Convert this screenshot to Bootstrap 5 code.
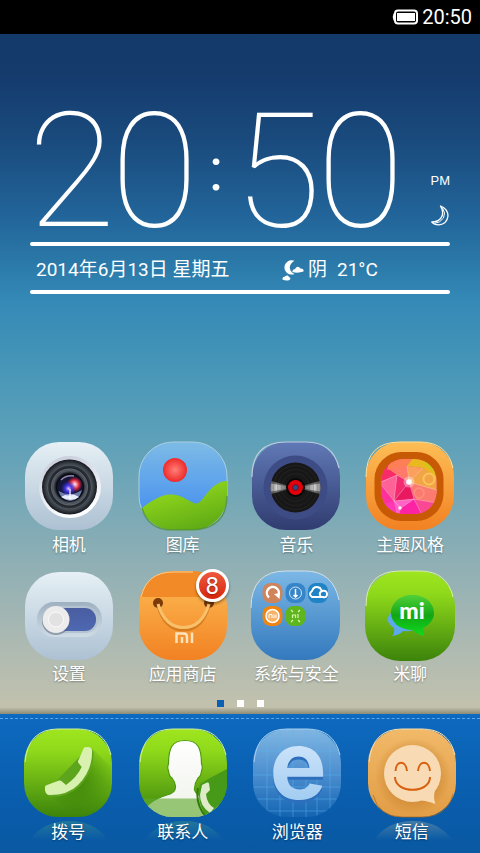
<!DOCTYPE html>
<html lang="zh-CN">
<head>
<meta charset="utf-8">
<meta name="viewport" content="width=device-width, initial-scale=1">
<title>桌面</title>
<link href="https://cdn.jsdelivr.net/npm/bootstrap@5.3.0/dist/css/bootstrap.min.css" rel="stylesheet">
<style>
body{font-family:"Noto Sans CJK SC",sans-serif;background:#0a58a4}
.latin{font-family:Roboto,"Liberation Sans",sans-serif}
.status-bar{height:34px;background:#000;font-size:20px;line-height:34px}
.wallpaper{background:linear-gradient(180deg,#143a6c 0%,#153b6d 6%,#1a4b7e 16%,#22659a 27%,#2b7aa9 34%,#3489b6 39%,#4796b8 49%,#5ca0b9 59%,#8aaeb5 76%,#a6b7b3 87%,#bec0ae 97%,#c2c1ad 99%,#8c8b76 100%)}
.clock-widget{margin:68px 30px 0}
.clock-face{height:136px}
.digit{width:83px;height:136px;font-size:160px;line-height:140px;font-weight:100}
.colon{width:40px;font-size:60px;line-height:60px}
.meridiem{font-family:"Liberation Sans",sans-serif;font-size:13px;line-height:16px;padding-top:71px}
.rule{height:4px;border-radius:2px;background:#fff}
.info-row{height:44px;padding:4px 6px 0;font-family:Roboto,"Noto Sans CJK SC",sans-serif;font-size:19px;line-height:40px}
.date-part{width:246px}
.sky-state{width:29px}
.app-rows{padding:0 13px 0 12px;row-gap:13px}
.app{color:#fff;font-size:17px;line-height:26px;text-shadow:0 1px 2px rgba(0,0,0,.35)}
.app:hover{color:#fff}
.app svg{display:block;overflow:visible}
.count{position:absolute;left:58px;top:-1px;width:33px;height:33px;border:3px solid #fff;border-radius:50%;background:linear-gradient(#ee5a3c,#d8260c);font-size:24px;line-height:28px;box-shadow:0 2px 3px rgba(0,0,0,.4)}
.pager{gap:13px;padding:14px 0 7px}
.pager button{width:7px;height:7px;background:#fff}
.pager .current{background:#0c60b4}
.dock{background:linear-gradient(#0d6ac0,#0a5fb0 50%,#0958a2);padding:4px 11px 9px}
.stitch{border-top:1px dashed #5aa6e6;margin:0 -11px 9px}
.browser-letter{font:700 96px Inter,"Liberation Sans",sans-serif;filter:drop-shadow(0 3px 0 #2d6fbd);text-shadow:none}
</style>
</head>
<body class="min-vh-100 d-flex flex-column text-white">
<svg width="0" height="0" class="position-absolute" aria-hidden="true">
<defs>
<clipPath id="tile"><rect x="1" y="1" width="88" height="88" rx="34"/></clipPath>
<linearGradient id="silver" x2="0" y2="1"><stop offset="0" stop-color="#e6f0f5"/><stop offset="1" stop-color="#adc1d3"/></linearGradient>
<linearGradient id="sky" x2="0" y2="1"><stop offset="0" stop-color="#7dbbe6"/><stop offset=".7" stop-color="#4f97ee"/></linearGradient>
<linearGradient id="hill" x2=".5" y2="1"><stop offset="0" stop-color="#a0e41e"/><stop offset="1" stop-color="#62ad16"/></linearGradient>
<linearGradient id="navy" x2="0" y2="1"><stop offset="0" stop-color="#6079b6"/><stop offset="1" stop-color="#303c70"/></linearGradient>
<linearGradient id="amber" x2="0" y2="1"><stop offset="0" stop-color="#fdbe56"/><stop offset="1" stop-color="#f28122"/></linearGradient>
<linearGradient id="folder" x2="0" y2="1"><stop offset="0" stop-color="#7cb8e6"/><stop offset="1" stop-color="#3379bd"/></linearGradient>
<linearGradient id="lime" x2="0" y2="1"><stop offset="0" stop-color="#9fe61e"/><stop offset=".25" stop-color="#8fd91b"/><stop offset="1" stop-color="#3c830b"/></linearGradient>
<linearGradient id="peach" x2="0" y2="1"><stop offset="0" stop-color="#f1b969"/><stop offset="1" stop-color="#e29d45"/></linearGradient>
<linearGradient id="glass" x2="0" y2="1"><stop offset="0" stop-color="#80b6e2"/><stop offset=".5" stop-color="#4d8fd0"/><stop offset="1" stop-color="#1464b2"/></linearGradient>
<linearGradient id="reflect" x2="0" y2="1"><stop offset="0" stop-color="#46a088" stop-opacity=".4"/><stop offset="1" stop-color="#46a088" stop-opacity="0"/></linearGradient>
<linearGradient id="reflectWarm" x2="0" y2="1"><stop offset="0" stop-color="#c9c9a0" stop-opacity=".3"/><stop offset="1" stop-color="#c9c9a0" stop-opacity="0"/></linearGradient>
</defs>
</svg>

<header class="status-bar latin d-flex align-items-center justify-content-end pe-2">
<svg class="me-1" width="26" height="16" viewBox="0 0 26 16" role="img" aria-label="电池"><rect x="3" y="1.500" width="22" height="13" rx="3" fill="none" stroke="#fff" stroke-width="2"/><path d="M3 4.500H1.500Q0 8 1.500 11.500H3Z" fill="#fff"/><rect x="5" y="4" width="18" height="8" fill="#fff"/></svg>
<span>20:50</span>
</header>

<main class="wallpaper flex-grow-1 d-flex flex-column">
<section class="clock-widget">
<div class="clock-face latin d-flex">
<span class="digit d-flex justify-content-center">2</span><span class="digit d-flex justify-content-center">0</span><span class="colon text-center align-self-center">:</span><span class="digit d-flex justify-content-center">5</span><span class="digit d-flex justify-content-center">0</span>
<div class="meridiem ms-auto text-end"><div>PM</div>
<svg class="mt-3 d-block" width="18" height="21" viewBox="0 0 18 21" fill="none" stroke="#fff" stroke-width="1.300" stroke-linejoin="round" role="img" aria-label="夜间"><path d="M9.500 1Q17 4 17 11Q16 19 8 19.800Q3 19.800 .8 17Q7 17 10 13Q13.500 8 9.500 1Z"/><path d="M11.500 3Q15 8 12.500 13Q9 18 4 18.200" stroke-width="1"/></svg></div>
</div>
<div class="rule mt-1"></div>
<div class="info-row d-flex align-items-center">
<div class="date-part">2014年6月13日 星期五</div>
<svg class="me-1" width="22" height="21" viewBox="0 0 22 21" fill="#fff" aria-hidden="true"><path d="M12.500 .8A7.200 7.200 0 1 0 12.500 14L10 12.500Q4.500 6 12.500 .8Z"/><path d="M10.500 12Q10 9.500 13 9Q15.500 5 18.500 8.500Q22 8.500 21.500 11.500Q16 13.500 10.500 12ZM.5 19.500Q0 17 3 16.500Q5.500 14.500 7 17Q9.500 18 7.500 20Q4 21.300 .5 19.500Z"/></svg>
<span class="sky-state">阴</span><span>21°C</span>
</div>
<div class="rule"></div>
</section>

<nav class="app-rows row g-0 mt-auto" aria-label="应用">
<a href="#" class="app col-3 text-decoration-none d-flex flex-column align-items-center">
<svg width="90" height="90" viewBox="0 0 90 90"><defs><radialGradient id="lens"><stop offset="0" stop-color="#1b1f33"/><stop offset=".5" stop-color="#171a22"/><stop offset=".6" stop-color="#555c66"/><stop offset=".7" stop-color="#20242a"/><stop offset=".84" stop-color="#41474f"/><stop offset="1" stop-color="#14171c"/></radialGradient><linearGradient id="bezel" x2=".4" y2="1"><stop offset="0" stop-color="#c3c8d6"/><stop offset=".5" stop-color="#dfe2ec"/><stop offset="1" stop-color="#fdfeff"/></linearGradient><radialGradient id="redGlow"><stop offset="0" stop-color="#fff"/><stop offset=".3" stop-color="#ff8a90"/><stop offset=".6" stop-color="#e0233a" stop-opacity=".9"/><stop offset="1" stop-color="#a01030" stop-opacity="0"/></radialGradient><radialGradient id="blueGlow"><stop offset="0" stop-color="#e6c6ff"/><stop offset=".35" stop-color="#4a3cf0"/><stop offset="1" stop-color="#2020c0" stop-opacity="0"/></radialGradient></defs><rect x="1" y="1" width="88" height="88" rx="34" fill="url(#silver)"/><circle cx="46" cy="46" r="31" fill="url(#bezel)"/><circle cx="45.500" cy="46" r="27.500" fill="url(#lens)"/><circle cx="45.500" cy="46" r="22" fill="none" stroke="#626a73" stroke-width=".6"/><circle cx="45.500" cy="46" r="18" fill="none" stroke="#7b838b" stroke-width=".6"/><circle cx="46" cy="46.500" r="13.500" fill="#151736" stroke="#050508"/><path d="M34.500 50Q46 57 58 49Q55 60 46 60Q37 59 34.500 50Z" fill="#8fa6d0" opacity=".75"/><path d="M37 56Q46 50 55 56Q47 62 37 56Z" fill="#e9effa"/><circle cx="50.500" cy="43.500" r="8" fill="url(#redGlow)"/><circle cx="44.500" cy="47.500" r="8" fill="url(#blueGlow)"/><path d="M46 48V58" stroke="#fff" stroke-width="1.200"/><path d="M37 39Q42 34 50 35" fill="none" stroke="#8e86a8" stroke-width="1.500"/></svg>
相机</a>
<a href="#" class="app col-3 text-decoration-none d-flex flex-column align-items-center">
<svg width="90" height="90" viewBox="0 0 90 90"><defs><radialGradient id="sun"><stop offset="0" stop-color="#ff8078"/><stop offset="1" stop-color="#ee2a2a"/></radialGradient></defs><rect x="1" y="1" width="88" height="88" rx="34" fill="url(#sky)" stroke="#a9cfe0" stroke-width="1"/><g clip-path="url(#tile)"><path d="M0 70C12 61 22 53 34 53.500C45 54 54 63 59 62.500C66 61 72 40 90 40V90H0Z" fill="url(#hill)"/><circle cx="37" cy="29" r="12" fill="url(#sun)"/></g><path d="M4 67Q10 89 35 89H55Q89 87 89 55" fill="none" stroke="#488c38" stroke-width="1.500" opacity=".7"/></svg>
图库</a>
<a href="#" class="app col-3 text-decoration-none d-flex flex-column align-items-center">
<svg width="90" height="90" viewBox="0 0 90 90"><defs><linearGradient id="shine" x2="1" y2="0"><stop offset="0" stop-color="#888"/><stop offset=".12" stop-color="#ccc"/><stop offset=".4" stop-color="#444"/><stop offset=".6" stop-color="#444"/><stop offset=".88" stop-color="#ccc"/><stop offset="1" stop-color="#888"/></linearGradient></defs><rect x="1" y="1" width="88" height="88" rx="34" fill="url(#navy)"/><path d="M1 36Q1 1 35 1H55Q82 1 88 27" fill="none" stroke="#c0cbdf" stroke-width="1.200"/><circle cx="44.500" cy="46.500" r="32" fill="#3e4c85"/><circle cx="44.500" cy="46.500" r="25" fill="#171717"/><path d="M44.500 46.500L20 40Q19 47 20 53ZM44.500 46.500L69 40Q70 47 69 53Z" fill="url(#shine)" opacity=".5"/><path d="M44.500 46.500L20 42.500Q19 47 20 50.500ZM44.500 46.500L69 42.500Q70 47 69 50.500Z" fill="url(#shine)"/><g fill="none" stroke="#444" stroke-opacity=".5" stroke-width=".5"><circle cx="44.500" cy="46.500" r="22"/><circle cx="44.500" cy="46.500" r="18"/><circle cx="44.500" cy="46.500" r="14"/></g><circle cx="44.500" cy="46.500" r="9.500" fill="#080808"/><circle cx="44.500" cy="46.500" r="7.500" fill="#e3000b"/><circle cx="44.500" cy="46.500" r="3" fill="#2d4a86" stroke="#800" stroke-width=".8"/></svg>
音乐</a>
<a href="#" class="app col-3 text-decoration-none d-flex flex-column align-items-center">
<svg width="90" height="90" viewBox="0 0 90 90"><defs><clipPath id="gemClip"><rect x="16.500" y="18" width="55" height="55" rx="22"/></clipPath></defs><rect x="1" y="1" width="88" height="88" rx="34" fill="url(#amber)"/><path d="M1 36Q1 1 35 1H55Q82 1 88 27" fill="none" stroke="#ffe09a"/><rect x="9.500" y="11" width="69" height="69" rx="27" fill="#c95a05"/><g clip-path="url(#gemClip)"><path d="M14 15H75V75H14Z" fill="#f9578f"/><path d="M14 17H32L32 34L14 42Z" fill="#f92a68"/><path d="M22 27L42 25L44 41L32 34Z" fill="#ff7a68"/><path d="M26 15H52L42 25L22 29Z" fill="#fc7f55"/><path d="M50 15H75V40L58 27L42 25Z" fill="#e9b91f"/><path d="M56 15H75V36L60 24Z" fill="#c8cc16"/><path d="M42 25L58 27L44 41Z" fill="#fba05c"/><path d="M44 41L58 27L75 38V52L58 56Z" fill="#f3a447"/><path d="M44 41L75 50V62L52 60Z" fill="#fc7b70"/><path d="M44 41L32 34L29 60Z" fill="#f32b71"/><path d="M44 41L49 58L29 60Z" fill="#e9195f"/><path d="M32 34L14 41L29 60Z" fill="#ff6296"/><path d="M14 41L29 60L14 66Z" fill="#ff2f9b"/><path d="M29 60L14 64L24 76H34Z" fill="#ff38b6"/><path d="M29 60L49 58L36 68L32 76Z" fill="#ff63c4"/><path d="M49 58L36 67L34 76H60Z" fill="#fc23a4"/><path d="M49 58L72 62L58 76Z" fill="#fb4894"/><g fill="none" stroke="#fff" stroke-opacity=".4" stroke-width=".7"><path d="M14 42L32 34L44 41L42 25M44 41L58 27M32 34L29 60L49 58L44 41L75 50M29 60L14 41M29 60L44 41M49 58L36 67L29 60M49 58L58 76M49 58L72 62"/></g><circle cx="64" cy="38" r="5.500" fill="none" stroke="#ffe36d" stroke-width="2" opacity=".5"/><circle cx="54" cy="52" r="5" fill="none" stroke="#ffc08a" stroke-width="1.500" opacity=".35"/><circle cx="44" cy="41" r="5.500" fill="#fff" opacity=".35"/><circle cx="44" cy="41" r="2.800" fill="#fff"/><circle cx="35" cy="67" r="1.800" fill="#fff" opacity=".9"/></g></svg>
主题风格</a>
<a href="#" class="app col-3 text-decoration-none d-flex flex-column align-items-center">
<svg width="90" height="90" viewBox="0 0 90 90"><defs><linearGradient id="groove" x2="0" y2="1"><stop offset="0" stop-color="#9fb0c0"/><stop offset="1" stop-color="#cfdce6"/></linearGradient><linearGradient id="switchOn" x2="0" y2="1"><stop offset="0" stop-color="#4a5da0"/><stop offset="1" stop-color="#4e68b2"/></linearGradient></defs><rect x="1" y="2" width="88" height="88" rx="34" fill="url(#silver)"/><rect x="13" y="32" width="65" height="35" rx="17" fill="url(#groove)"/><rect x="18" y="36" width="56" height="27" rx="13" fill="#b4c3d1"/><rect x="27" y="38" width="45" height="23" rx="11" fill="url(#switchOn)"/><circle cx="32" cy="51" r="14" fill="#566476" opacity=".5"/><circle cx="32" cy="49.500" r="13.500" fill="#ececec"/><circle cx="32" cy="49.500" r="7.500" fill="#e2e2e2" stroke="#fbfbfb"/></svg>
设置</a>
<a href="#" class="app col-3 text-decoration-none d-flex flex-column align-items-center">
<span class="position-relative text-center">
<svg width="90" height="90" viewBox="0 0 90 90"><rect x="1" y="2" width="88" height="88" rx="34" fill="url(#amber)"/><g clip-path="url(#tile)"><path d="M0 1H90V27H0Z" fill="#f38a28"/></g><path d="M3 27Q9 2 35 2H55" fill="none" stroke="#fbd08a"/><circle cx="20" cy="33" r="5" fill="#7c3a08"/><circle cx="71" cy="33" r="5" fill="#7c3a08"/><path d="M20 36Q27 60 45.500 60Q64 60 71 36" fill="none" stroke="#c96f14" stroke-width="3" opacity=".7"/><path d="M20 34Q27 57.500 45.500 57.500Q64 57.500 71 34" fill="none" stroke="#f8c06a" stroke-width="3"/><path d="M38.500 73V63.500H46Q49 63.500 49 67V73M44 67V73M54 62.500V73" fill="none" stroke="#fde3bb" stroke-width="2.500"/></svg>
<span class="count latin">8</span></span>
应用商店</a>
<a href="#" class="app col-3 text-decoration-none d-flex flex-column align-items-center">
<svg width="90" height="90" viewBox="0 0 90 90"><rect x="0" y="1" width="89" height="89" rx="34" fill="url(#folder)"/><path d="M0 38Q0 1 35 1H54Q82 1 88 30" fill="none" stroke="#cfe0ea"/><rect x="11.500" y="13" width="20" height="20" rx="8" fill="#cf845c"/><path d="M18 27.500A6 6 0 1 1 27 26" fill="none" stroke="#fff" stroke-width="2.400"/><path d="M23 24L29 23L28.500 29Z" fill="#fff"/><rect x="34.500" y="13" width="20" height="20" rx="8" fill="#3785c9"/><circle cx="44.500" cy="23" r="6" fill="none" stroke="#cde6fb" stroke-width="1"/><path d="M44.500 19V26M42.500 25L44.500 27L46.500 25" fill="none" stroke="#fff" stroke-width="1.500"/><rect x="57" y="13" width="20" height="20" rx="8" fill="#1f83c6"/><path d="M61 27Q57 24 61 21Q63 15 69 18L71 21Q76 20 76 24Q76 28 72 27ZM71 21Q67 23 70 27" fill="none" stroke="#fff" stroke-width="2"/><rect x="11.500" y="36" width="20" height="20" rx="8" fill="#ef8411"/><circle cx="21.500" cy="46" r="6.500" fill="#f6b266" stroke="#fff" stroke-width="1.500"/><path d="M18 48V44.500H21V48M23 44.500V48M25 44.500V48" fill="none" stroke="#fff"/><rect x="34.500" y="36" width="20" height="20" rx="8" fill="#5eb51c"/><path d="M41.500 48V45H44.500V48M47 44V48M40 40L42 42M49 40L47 42M40 52L42 50M49 52L47 50" fill="none" stroke="#d8f5b4" stroke-width="1.200"/></svg>
系统与安全</a>
<a href="#" class="app col-3 text-decoration-none d-flex flex-column align-items-center">
<svg width="90" height="90" viewBox="0 0 90 90"><defs><linearGradient id="bubble" x2="0" y2="1"><stop offset="0" stop-color="#4fd03a"/><stop offset=".5" stop-color="#12a614"/><stop offset="1" stop-color="#0fdc1f"/></linearGradient></defs><rect x="0" y="1" width="90" height="90" rx="35" fill="url(#lime)"/><path d="M1 36Q1 1 35 1H55Q82 1 88 27" fill="none" stroke="#d7ecb0"/><path d="M28 41Q17 50 29 58Q30 63 27 66Q35 65 38 61Q49 62 52 57Z" fill="#5da9ee"/><path d="M47 25C60 25 69 33 69 43C69 49 65 55 58 58Q57 62 59 66Q52 64 48 60C34 60 26 52 26 43C26 33 35 25 47 25Z" fill="url(#bubble)"/><text x="47" y="49" text-anchor="middle" font-family="Lato,sans-serif" font-weight="900" font-size="23" fill="#fff" style="text-shadow:none">mi</text></svg>
米聊</a>
</nav>
<div class="pager d-flex justify-content-center" role="group" aria-label="页面"><button type="button" class="border-0 p-0 current" aria-label="第1页"></button><button type="button" class="border-0 p-0" aria-label="第2页"></button><button type="button" class="border-0 p-0" aria-label="第3页"></button></div>
</main>

<footer class="dock">
<div class="stitch"></div>
<nav class="row g-0" aria-label="快捷栏">
<a href="#" class="app col-3 text-decoration-none d-flex flex-column align-items-center">
<svg width="90" height="90" viewBox="0 0 90 90"><defs><radialGradient id="castShade" cx=".45" cy=".4" r=".55"><stop offset="0" stop-color="#2f7607" stop-opacity=".75"/><stop offset="1" stop-color="#2f7607" stop-opacity="0"/></radialGradient></defs><path d="M7 112Q20 93 46 93Q72 93 85 112Z" fill="url(#reflect)"/><rect x="1" y="1" width="88" height="88" rx="34" fill="url(#lime)"/><path d="M2 34Q5 1 35 1H55Q82 1 88 27" fill="none" stroke="#d0efa0"/><path d="M69 20L89 40V60Q80 90 52 89L25 66Q64 60 69 20Z" fill="url(#castShade)"/><path d="M64 21Q70 20 70.500 25Q71 44 56 59Q45 69 28 69Q23 69 23 64Z" fill="#5da51c"/><path d="M61 19.500Q68 17.500 69 22Q70 42 55 57Q45 67 27 67Q22.500 67 22 62V59Q22 57.500 24 57L36 52.500Q37.500 52 39 53.500L43 57Q54 49 58.700 39L55.500 35Q54.500 33.500 55.500 32Z" fill="#d9f1ae"/></svg>
拨号</a>
<a href="#" class="app col-3 text-decoration-none d-flex flex-column align-items-center">
<svg width="90" height="90" viewBox="0 0 90 90"><defs><linearGradient id="bust" x2="0" y2="1"><stop offset="0" stop-color="#fff"/><stop offset="1" stop-color="#eef1e8"/></linearGradient></defs><path d="M7 112Q20 93 46 93Q72 93 85 112Z" fill="url(#reflect)"/><rect x="1" y="1" width="88" height="88" rx="34" fill="url(#lime)"/><path d="M2 34Q5 1 35 1H55Q82 1 88 27" fill="none" stroke="#d0efa0"/><g clip-path="url(#tile)"><path d="M47 12.500C60 12.500 63.500 20 63.500 36Q65 39 63.500 43Q63 48 60 50Q56 56 56.500 62Q59 68 66 69Q81 74 86 84V92H5V84Q10 73 29 67Q38 65 37.500 58Q37 54 34 50Q31 48 30.500 43Q29 39 30.500 36C30.500 20 34 12.500 47 12.500Z" fill="url(#bust)" stroke="#4d9a12" stroke-width="1.200"/><path d="M4 70.500H88V91H4Z" fill="#5fa92f" opacity=".62"/><path d="M62 56Q58 74 69 90H91V40L72 50Z" fill="#469a18"/><path d="M64 57L69 54.500Q70.500 54 71 55.500L72 62L68 66Q69 76 76 80L72 85Q62 78 62 67Z" fill="#ddebc9"/><path d="M60 60Q57 76 68 89" fill="none" stroke="#337c0a" stroke-width="2"/></g></svg>
联系人</a>
<a href="#" class="app col-3 text-decoration-none d-flex flex-column align-items-center">
<svg width="90" height="90" viewBox="0 0 90 90"><defs><linearGradient id="letter" x2="0" y2="1"><stop offset="0" stop-color="#e9f4ff"/><stop offset="1" stop-color="#92c3ef"/></linearGradient></defs><rect x="1" y="1" width="88" height="88" rx="34" fill="url(#glass)"/><path d="M2 34Q5 1 35 1H55Q82 1 88 27" fill="none" stroke="#a9d0f0"/><g clip-path="url(#tile)"><path d="M0 23H90M0 47H90M0 59H90M0 71H90M0 83H90M15 0V90M28 0V90M41 0V90M54 0V90M65 0V90M78 0V90" stroke="#5db9f0" stroke-width=".8" opacity=".55"/></g><text class="browser-letter" x="46" y="71" text-anchor="middle" fill="url(#letter)">e</text></svg>
浏览器</a>
<a href="#" class="app col-3 text-decoration-none d-flex flex-column align-items-center">
<svg width="90" height="90" viewBox="0 0 90 90"><defs><radialGradient id="halo"><stop offset=".6" stop-color="#bd7622" stop-opacity=".5"/><stop offset="1" stop-color="#bd7622" stop-opacity="0"/></radialGradient></defs><path d="M7 112Q20 93 46 93Q72 93 85 112Z" fill="url(#reflectWarm)"/><rect x="1" y="1" width="88" height="88" rx="34" fill="url(#peach)"/><path d="M2 34Q5 1 35 1H55Q82 1 88 27" fill="none" stroke="#fbe0ac"/><path d="M6 67Q12 89 35 89H55Q80 89 86 66" fill="none" stroke="#a5661d" opacity=".7"/><circle cx="46" cy="48" r="38" fill="url(#halo)"/><circle cx="45.500" cy="45.500" r="28.500" fill="#f8dbb4"/><path d="M48 72Q58 72 68.500 76Q66 70 68 62Z" fill="#f8dbb4"/><path d="M28.500 43C29 32 39 32 40 43M51 43C52 32 62 32 63 43M28 49C28 66 63 66 63 49" fill="none" stroke="#d8600f" stroke-width="2"/></svg>
短信</a>
</nav>
</footer>
<script src="https://cdn.jsdelivr.net/npm/bootstrap@5.3.0/dist/js/bootstrap.bundle.min.js"></script>
</body>
</html>
